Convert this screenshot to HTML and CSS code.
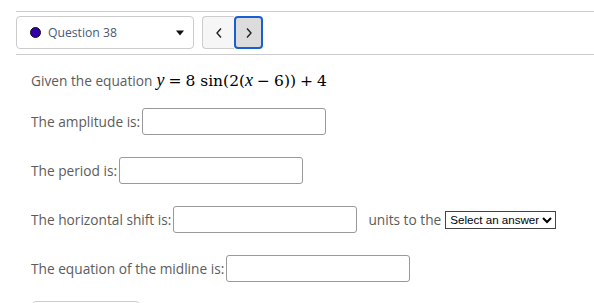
FILE: index.html
```html
<!DOCTYPE html>
<html>
<head>
<meta charset="utf-8">
<link rel="stylesheet" href="styles.css">
</head>
<body>
<div class="bar">
  <div class="qselect">
    <span class="dot"></span>
    <span class="qlabel">Question 38</span>
    <svg class="caret" width="8" height="6" viewBox="0 0 8 6"><path d="M0 0.5 H8 L4 5.5 Z" fill="#111"/></svg>
  </div>
  <div class="nav">
    <button class="navbtn prev"><svg width="8" height="12" viewBox="0 0 8 12"><path d="M6 1.5 L2 6 L6 10.5" fill="none" stroke="#222" stroke-width="1.4"/></svg></button>
    <button class="navbtn next"><svg width="8" height="12" viewBox="0 0 8 12"><path d="M2 1.5 L6 6 L2 10.5" fill="none" stroke="#222" stroke-width="1.4"/></svg></button>
  </div>
</div>
<div class="content">
  <p class="intro">Given the equation <span class="math"><i>y</i><span class="op">=</span>8 sin(2(<i>x</i><span class="op">&minus;</span>6))<span class="op">+</span>4</span></p>
  <div class="row"><span class="label">The amplitude is:</span><span class="input"></span></div>
  <div class="row"><span class="label">The period is:</span><span class="input"></span></div>
  <div class="row"><span class="label">The horizontal shift is:</span><span class="input"></span><span class="label units">units to the</span>
    <select class="answer"><option>Select an answer</option></select></div>
  <div class="row"><span class="label">The equation of the midline is:</span><span class="input"></span></div>
  <div class="submit"></div>
</div>
</body>
</html>
```
FILE: styles.css
```css
html, body { margin: 0; padding: 0; background: #fff; }
body { font-family: "Open Sans", sans-serif; color: #5c5c5c; overflow: hidden; }
.bar {
  margin: 11px 0 0 16px;
  border-top: 1px solid #ccc;
  border-bottom: 1px solid #ccc;
  padding: 4px 0 5px 0;
  display: flex;
  align-items: center;
  gap: 8px;
}
.qselect {
  box-sizing: border-box;
  width: 178px;
  height: 33px;
  border: 1px solid #ccc;
  border-radius: 4px;
  display: flex;
  align-items: center;
  padding-left: 13px;
  padding-right: 9px;
}
.dot {
  width: 9px; height: 9px;
  border-radius: 50%;
  background: #3300aa;
  border: 1px solid #111;
  margin-right: 7px;
}
.qlabel { font-size: 12.2px; color: #4a5a78; flex: 1; }
.caret { display: block; }
.nav { display: flex; }
.navbtn {
  box-sizing: border-box;
  height: 33px;
  padding: 0;
  margin: 0;
  display: flex;
  align-items: center;
  justify-content: center;
}
.navbtn svg { display: block; }
.prev {
  width: 32px;
  background: #f6f6f6;
  border: 1px solid #ccc;
  border-right: none;
  border-radius: 4px 0 0 4px;
}
.next {
  width: 29px;
  background: #dcdcdc;
  border: 2px solid #1a5fd0;
  border-radius: 4px;
}
.content { padding-left: 31px; }
.intro { margin: 15px 0 0 0; font-size: 13.7px; height: 24px; display: flex; align-items: baseline; }
.math { font-family: "DejaVu Serif", serif; font-size: 15.5px; color: #000; margin-left: 4px; white-space: pre; }
.math i { font-family: "Liberation Serif", serif; font-size: 18px; }
.math .op { margin: 0 4px; }
.row {
  display: flex;
  align-items: center;
  height: 27px;
  font-size: 13.7px;
}
.intro + .row { margin-top: 14px; }
.row + .row { margin-top: 22px; }
.label { margin-right: 2px; }
.input {
  box-sizing: border-box;
  width: 184px;
  height: 27px;
  border: 1px solid #999;
  border-radius: 3px;
}
.units { margin-left: 11px; margin-right: 4px; }
.answer {
  font-family: "Liberation Sans", Arial, sans-serif;
  font-size: 11.6px;
  color: #000;
  height: 18px;
  border: 1px solid #444;
  border-radius: 0;
  padding: 0;
  background: #fff;
}
.submit {
  margin-top: 19px;
  margin-left: 1px;
  width: 106px;
  height: 20px;
  border: 1px solid #ccc;
  border-radius: 4px;
}
```
